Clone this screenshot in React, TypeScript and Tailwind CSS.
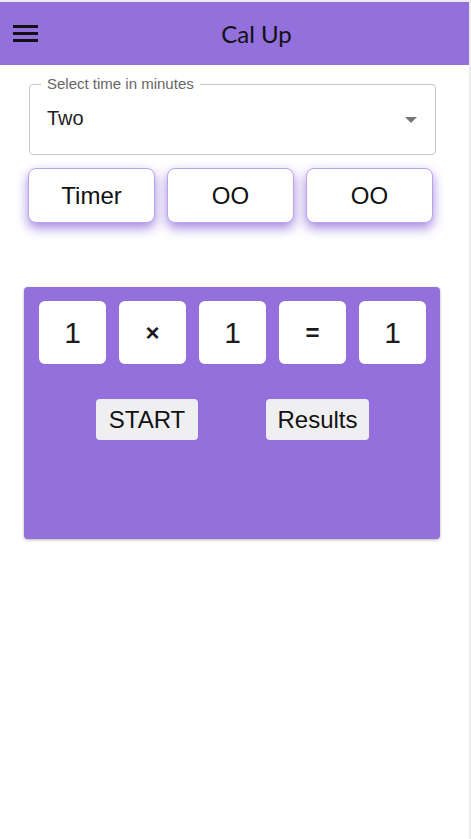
import React from "react";

const cells = ["1", "×", "1", "=", "1"];

export default function App() {
    return (
        <div className="flex min-h-[839px] w-[471px] bg-white" style={{ fontFamily: "'Liberation Sans', Arial, sans-serif" }}>
            <div className="flex w-[469px] flex-col border-t-2 border-[#ececec]">
                <header className="flex h-[63px] items-center bg-[#9370db]">
                    <button className="ml-[13px] flex w-[25px] flex-col gap-[4px]">
                        <span className="h-[3px] w-full bg-[#111]" />
                        <span className="h-[3px] w-full bg-[#111]" />
                        <span className="h-[3px] w-full bg-[#111]" />
                    </button>
                    <h1 className="flex-1 pl-[6px] text-center text-[24px] text-[#111]" style={{ fontFamily: "Lato, sans-serif" }}>
                        Cal Up
                    </h1>
                </header>

                <div className="relative mx-[29px] mt-[19px] h-[71px] w-[407px] rounded-[4px] border border-[#c8c8c8]">
                    <span className="absolute -top-[10px] left-[11px] bg-white px-[6px] text-[15px] leading-[18px] text-[#666]">
                        Select time in minutes
                    </span>
                    <div className="flex h-full items-center justify-between pl-[17px] pr-[18px]">
                        <span className="pb-[4px] text-[20px] text-[#222]">Two</span>
                        <span className="h-0 w-0 border-x-[6px] border-t-[6px] border-x-transparent border-t-[#777]" />
                    </div>
                </div>

                <div className="ml-[28px] mt-[13px] flex gap-[12px]">
                    {["Timer", "OO", "OO"].map((t, i) => (
                        <div
                            key={i}
                            className="flex h-[55px] w-[127px] items-center justify-center rounded-[8px] border border-[#b9a3ee] bg-white text-[24px] text-[#111] shadow-[0_5px_12px_rgba(147,112,219,0.85)]"
                        >
                            {t}
                        </div>
                    ))}
                </div>

                <div className="mx-[24px] mt-[64px] h-[252px] w-[416px] rounded-[4px] bg-[#9370db] shadow-[0_1px_3px_rgba(0,0,0,0.3)]">
                    <div className="ml-[15px] mt-[14px] flex gap-[13px]">
                        {cells.map((c, i) => (
                            <div
                                key={i}
                                className={`flex h-[63px] w-[67px] items-center justify-center rounded-[6px] bg-white text-[#1a1a1a] ${
                                    c === "1" ? "text-[30px]" : "text-[24px] font-bold"
                                }`}
                            >
                                {c}
                            </div>
                        ))}
                    </div>
                    <div className="mt-[35px] flex">
                        <button className="ml-[72px] h-[41px] w-[102px] rounded-[4px] bg-[#efeff1] text-[24px] text-[#111]">
                            START
                        </button>
                        <button className="ml-[68px] h-[41px] w-[103px] rounded-[4px] bg-[#efeff1] text-[24px] text-[#111]">
                            Results
                        </button>
                    </div>
                </div>
            </div>
            <div className="w-[2px] bg-[#ececec]" />
        </div>
    );
}
